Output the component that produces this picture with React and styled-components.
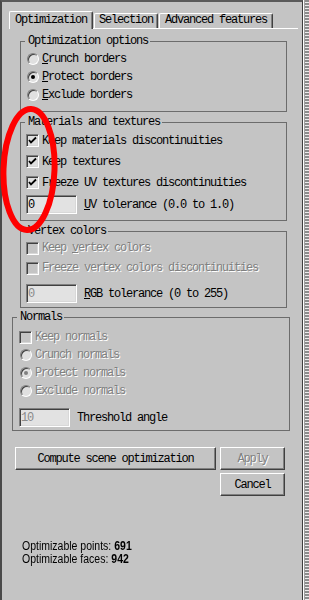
import React from "react";
import styled, { createGlobalStyle } from "styled-components";

const BG = "#c4c4c4";

const GlobalStyle = createGlobalStyle`
  html, body { margin: 0; padding: 0; background: ${BG}; }
  #root { width: 309px; height: 600px; }
`;

const Frame = styled.div`
  position: relative;
  display: flex;
  width: 309px;
  height: 600px;
  overflow: hidden;
  background: ${BG};
  font-family: "Liberation Mono", "DejaVu Sans Mono", monospace;
  font-size: 12px;
  letter-spacing: -1.2px;
  color: #000;
`;

const Main = styled.div`
  box-sizing: border-box;
  width: 303px;
  height: 600px;
  border-top: 2px solid #5a5a5a;
  border-left: 2px solid #4a4a4a;
  border-right: 1px solid #3e3e3e;
  display: flex;
  flex-direction: column;
`;

const Edge = styled.div`
  width: 6px;
  height: 600px;
  background:
    linear-gradient(to right, #ffffff 0 1px, #a0a0a0 1px 2px, transparent 2px),
    repeating-linear-gradient(to bottom, #8c8c8c 0 2px, #ececec 2px 3px);
`;

const TabRow = styled.div`
  display: flex;
  align-items: flex-end;
  gap: 1px;
  height: 17px;
  margin: 9px 0 0 7px;
`;

const Tab = styled.div`
  position: relative;
  z-index: ${(p) => (p.$active ? 1 : 0)};
  box-sizing: border-box;
  padding: ${(p) => (p.$active ? "1px" : "0")} ${(p) => p.$px}px 2px;
  margin-bottom: ${(p) => (p.$active ? "-1px" : "0")};
  line-height: ${(p) => (p.$active ? 14 : 12)}px;
  background: ${BG};
  border-left: 1px solid #fff;
  border-top: 1px solid #fff;
  border-right: 1px solid #404040;
  box-shadow: inset -1px 0 0 #808080;
  border-top-left-radius: 2px;
  border-top-right-radius: 2px;
  white-space: nowrap;
`;

const Panel = styled.div`
  display: flex;
  flex-direction: column;
  width: 289px;
  margin-left: 7px;
  border-top: 1px solid #fff;
`;

const Group = styled.fieldset`
  box-sizing: border-box;
  min-width: 0;
  width: ${(p) => p.$w}px;
  margin: ${(p) => p.$mt}px 0 0 ${(p) => p.$ml}px;
  padding: ${(p) => p.$pt}px 0 ${(p) => p.$pb}px ${(p) => p.$pl}px;
  border: 1px solid #6c6c6c;
  display: flex;
  flex-direction: column;
`;

const Legend = styled.legend`
  margin-left: ${(p) => p.$ml}px;
  padding: 0 2px 0 3px;
  line-height: 13px;
  height: 13px;
`;

const OptionRow = styled.div`
  display: flex;
  align-items: center;
  height: ${(p) => p.$h}px;
`;

const Slot = styled.span`
  display: flex;
  align-items: center;
  justify-content: flex-end;
  width: 13px;
  height: 13px;
  flex: none;
`;

const Box = styled.span`
  box-sizing: border-box;
  display: flex;
  align-items: center;
  justify-content: center;
  width: 13px;
  height: 13px;
  border: 1px solid;
  border-color: #808080 #ffffff #ffffff #808080;
  box-shadow: inset 1px 1px 0 #404040, inset -1px -1px 0 #d8d8d8;
  background: ${(p) => (p.$disabled ? BG : "#e0e0e0")};
`;

const Radio = styled.span`
  box-sizing: border-box;
  display: flex;
  align-items: center;
  justify-content: center;
  width: 12px;
  height: 12px;
  border-radius: 50%;
  border: 1px solid;
  border-color: #808080 #ffffff #ffffff #808080;
  box-shadow: inset 1px 1px 0 #404040;
  background: #e0e0e0;
`;

const Dot = styled.span`
  width: 4px;
  height: 4px;
  border-radius: 50%;
  background: ${(p) => (p.$disabled ? "#808080" : "#000")};
`;

const Label = styled.span`
  margin-left: 3px;
  white-space: nowrap;
  color: ${(p) => (p.$disabled ? "#808080" : "#000")};
  text-shadow: ${(p) => (p.$disabled ? "1px 1px 0 #ffffff" : "none")};
  u { text-decoration: underline; text-underline-offset: 1px; }
`;

const FieldRow = styled.div`
  display: flex;
  align-items: center;
  margin-top: ${(p) => p.$mt}px;
  height: 19px;
`;

const Field = styled.span`
  box-sizing: border-box;
  display: flex;
  align-items: center;
  width: 51px;
  height: 19px;
  padding-left: 1px;
  border: 1px solid;
  border-color: #808080 #ffffff #ffffff #808080;
  box-shadow: inset 1px 1px 0 #404040, inset -1px -1px 0 #d8d8d8;
  background: #e2e2e2;
  color: ${(p) => (p.$disabled ? "#8a8a8a" : "#000")};
`;

const FieldLabel = styled.span`
  margin-left: 7px;
  white-space: nowrap;
  u { text-decoration: underline; text-underline-offset: 1px; }
`;

const ButtonArea = styled.div`
  display: flex;
  align-items: flex-start;
  gap: 4px;
  margin: 16px 0 0 6px;
`;

const ButtonColumn = styled.div`
  display: flex;
  flex-direction: column;
  gap: 3px;
`;

const Button = styled.div`
  box-sizing: border-box;
  display: flex;
  align-items: center;
  justify-content: center;
  width: ${(p) => p.$w}px;
  height: 23px;
  border: 1px solid;
  border-color: #ffffff #404040 #404040 #ffffff;
  box-shadow: inset -1px -1px 0 #808080;
  background: ${BG};
  white-space: nowrap;
  color: ${(p) => (p.$disabled ? "#808080" : "#000")};
  text-shadow: ${(p) => (p.$disabled ? "1px 1px 0 #ffffff" : "none")};
`;

const Stats = styled.div`
  margin: 44px 0 0 13px;
  width: 140px;
  font-family: "Liberation Sans Narrow", "Arial Narrow", "Liberation Sans", sans-serif;
  font-size: 12.5px;
  letter-spacing: 0;
  transform: scaleX(0.84);
  transform-origin: left top;
  b { font-weight: bold; }
`;

const StatLine = styled.div`
  height: 12.5px;
  line-height: 12.5px;
  white-space: nowrap;
`;

const Overlay = styled.svg`
  position: absolute;
  left: 0;
  top: 0;
  pointer-events: none;
`;

const Check = () => (
  <svg width="9" height="9" viewBox="0 0 9 9">
    <path d="M1 4 L3 6.5 L8 1.5" fill="none" stroke="#000" strokeWidth="1.8" />
  </svg>
);

const CheckOption = ({ h, checked, disabled, children }) => (
  <OptionRow $h={h}>
    <Slot>
      <Box $disabled={disabled}>{checked && <Check />}</Box>
    </Slot>
    <Label $disabled={disabled}>{children}</Label>
  </OptionRow>
);

const RadioOption = ({ h, checked, disabled, children }) => (
  <OptionRow $h={h}>
    <Slot>
      <Radio>{checked && <Dot $disabled={disabled} />}</Radio>
    </Slot>
    <Label $disabled={disabled}>{children}</Label>
  </OptionRow>
);

export default function App() {
  return (
    <Frame>
      <GlobalStyle />
      <Main>
        <TabRow>
          <Tab $active $px={5}>Optimization</Tab>
          <Tab $px={4}>Selection</Tab>
          <Tab $px={5}>Advanced features</Tab>
        </TabRow>
        <Panel>
          <Group $w={267} $mt={6} $ml={11} $pt={2} $pb={7} $pl={5}>
            <Legend $ml={-1}>Optimization options</Legend>
            <RadioOption h={18}><u>C</u>runch borders</RadioOption>
            <RadioOption h={18} checked><u>P</u>rotect borders</RadioOption>
            <RadioOption h={18}><u>E</u>xclude borders</RadioOption>
          </Group>

          <Group $w={267} $mt={4} $ml={11} $pt={1} $pb={6} $pl={5}>
            <Legend $ml={-1}>Materials and textures</Legend>
            <CheckOption h={21} checked>Keep materials discontinuities</CheckOption>
            <CheckOption h={21} checked>Keep textures</CheckOption>
            <CheckOption h={21} checked>Freeze UV textures discontinuities</CheckOption>
            <FieldRow $mt={2}>
              <Field>0</Field>
              <FieldLabel><u>U</u>V tolerance (0.0 to 1.0)</FieldLabel>
            </FieldRow>
          </Group>

          <Group $w={267} $mt={4} $ml={11} $pt={0} $pb={4} $pl={5}>
            <Legend $ml={-1}>Vertex colors</Legend>
            <CheckOption h={20} disabled>Keep <u>v</u>ertex colors</CheckOption>
            <CheckOption h={20} disabled>Freeze vertex colors discontinuities</CheckOption>
            <FieldRow $mt={6}>
              <Field $disabled>0</Field>
              <FieldLabel><u>R</u>GB tolerance (0 to 255)</FieldLabel>
            </FieldRow>
          </Group>

          <Group $w={278} $mt={3} $ml={3} $pt={4} $pb={3} $pl={6}>
            <Legend $ml={-2}>Normals</Legend>
            <CheckOption h={18} disabled>Keep normals</CheckOption>
            <RadioOption h={18} disabled>Crunch normals</RadioOption>
            <RadioOption h={18} disabled checked>Protect normals</RadioOption>
            <RadioOption h={18} disabled>Exclude normals</RadioOption>
            <FieldRow $mt={8}>
              <Field $disabled>10</Field>
              <FieldLabel>Threshold angle</FieldLabel>
            </FieldRow>
          </Group>

          <ButtonArea>
            <Button $w={201}>Compute scene optimization</Button>
            <ButtonColumn>
              <Button $w={65} $disabled>Apply</Button>
              <Button $w={65}>Cancel</Button>
            </ButtonColumn>
          </ButtonArea>

          <Stats>
            <StatLine>Optimizable points: <b>691</b></StatLine>
            <StatLine>Optimizable faces: <b>942</b></StatLine>
          </Stats>
        </Panel>
      </Main>
      <Edge />
      <Overlay width="309" height="600" viewBox="0 0 309 600">
        <ellipse
          cx="29"
          cy="169.5"
          rx="25.5"
          ry="60.5"
          fill="none"
          stroke="#ff0000"
          strokeWidth="6"
          transform="rotate(2 29 169.5)"
        />
      </Overlay>
    </Frame>
  );
}
